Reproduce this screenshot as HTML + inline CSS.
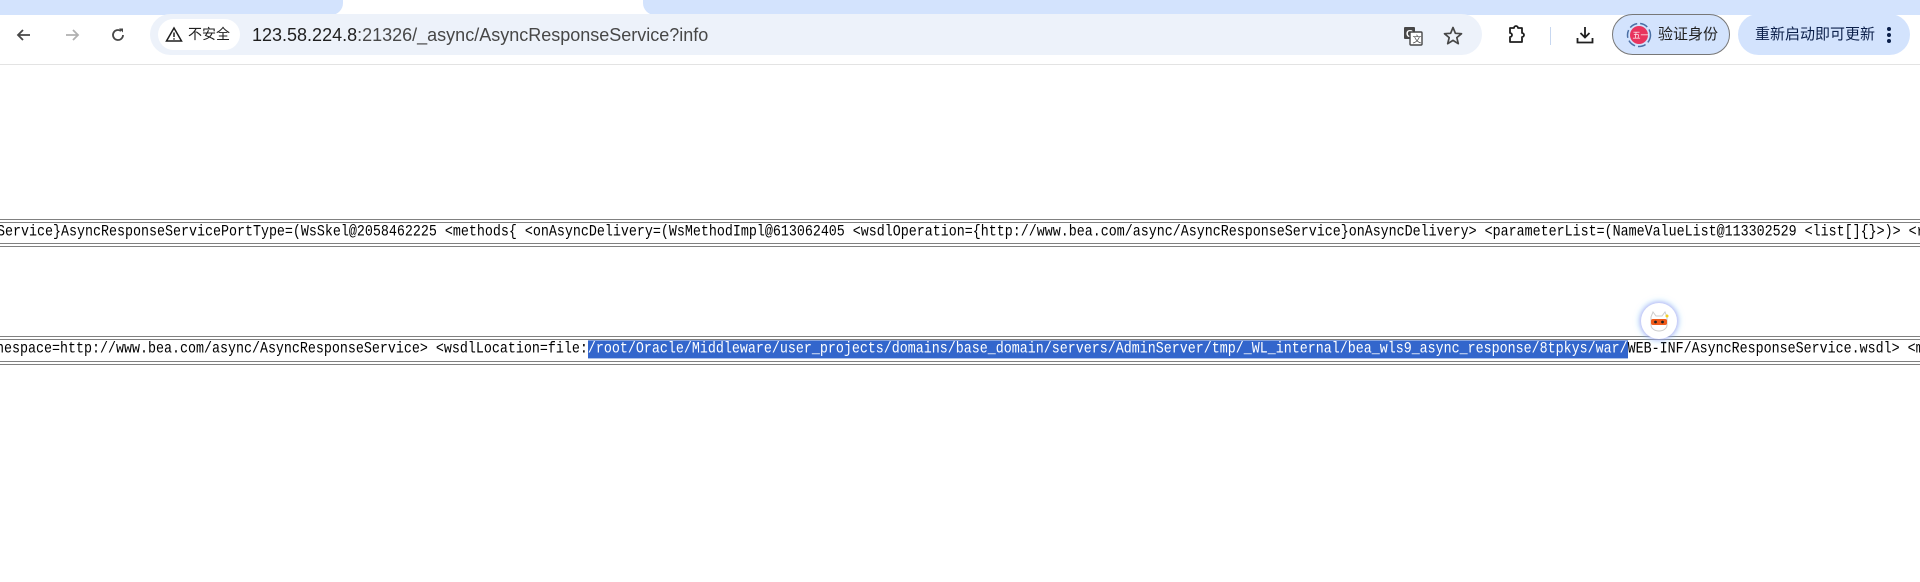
<!DOCTYPE html>
<html><head><meta charset="utf-8">
<style>
*{margin:0;padding:0;box-sizing:border-box}
body{width:1920px;height:582px;overflow:hidden;background:#fff;position:relative;font-family:"Liberation Sans","Noto Sans CJK SC",sans-serif}
.abs{position:absolute}
.strip{left:0;top:0;width:1920px;height:15px;background:#d3e3fd}
.tab{left:343px;top:0;width:300px;height:15px;background:#fff}
.tabl{left:323px;top:0;width:20px;height:15px;background:#fff}
.tabl:after{content:"";position:absolute;left:0;top:0;width:20px;height:15px;background:#d3e3fd;border-bottom-right-radius:12px}
.tabr{left:643px;top:0;width:20px;height:15px;background:#fff}
.tabr:after{content:"";position:absolute;left:0;top:0;width:20px;height:15px;background:#d3e3fd;border-bottom-left-radius:12px}
.bar{left:0;top:15px;width:1920px;height:50px;background:#fff;border-bottom:1px solid #e3e3e3}
.omni{left:150px;top:14px;width:1332px;height:41px;border-radius:21px;background:#edf2fa}
.chip{left:158px;top:19px;width:82px;height:31px;border-radius:16px;background:#fff;font-size:14px;color:#1f1f1f;line-height:31px;padding-left:30px}
.url{left:252px;top:24px;font-size:18px;color:#1f1f1f;line-height:22px}
.url span{color:#474747}
.pill1{left:1612px;top:14px;width:118px;height:41px;border-radius:21px;background:#d3e3fd;border:1px solid #777}
.pill2{left:1738px;top:14px;width:172px;height:41px;border-radius:21px;background:#d3e3fd}
.row{left:0;width:1930px;white-space:pre;font-family:"Liberation Mono",monospace;font-size:13.33px;color:#000;overflow:hidden;transform:scaleY(1.2);transform-origin:0 50%}
.ln{left:0;width:1920px;height:1px;background:#808080}
.sel{background:#3366cc;color:#fff}
</style></head><body>
<div class="abs strip"></div>
<div class="abs tabl"></div><div class="abs tab"></div><div class="abs tabr"></div>
<div class="abs bar"></div>
<svg class="abs" style="left:14px;top:25px" width="20" height="20" viewBox="0 0 20 20"><path d="M16 10H4M9 5L4 10L9 15" fill="none" stroke="#474747" stroke-width="1.8"/></svg>
<svg class="abs" style="left:62px;top:25px" width="20" height="20" viewBox="0 0 20 20"><path d="M4 10H16M11 5L16 10L11 15" fill="none" stroke="#b0b0b0" stroke-width="1.8"/></svg>
<svg class="abs" style="left:108px;top:25px" width="20" height="20" viewBox="0 0 20 20"><path d="M15 10A5 5 0 1 1 13 6" fill="none" stroke="#474747" stroke-width="1.8"/><path d="M11 3.5L15 3.5L15 7.5Z" fill="#474747"/></svg>
<div class="abs omni" style="top:14px"></div>
<div class="abs chip">不安全</div>
<svg class="abs" style="left:165px;top:26px" width="18" height="17" viewBox="0 0 18 17"><path d="M9 2L16.5 15H1.5Z" fill="none" stroke="#1f1f1f" stroke-width="1.5"/><path d="M9 6.5V11M9 12.3V13.6" stroke="#1f1f1f" stroke-width="1.5"/></svg>
<div class="abs url">123.58.224.8<span>:21326/_async/AsyncResponseService?info</span></div>
<svg class="abs" style="left:1402px;top:25px" width="22" height="22" viewBox="0 0 22 22"><rect x="2" y="2" width="11" height="12" rx="1" fill="#474747"/><text x="4" y="12" font-size="10" fill="#fff" font-family="Liberation Sans" font-weight="bold">G</text><rect x="8" y="7" width="12" height="13" rx="1" fill="#fff" stroke="#474747" stroke-width="1.4"/><text x="10.5" y="17.5" font-size="9" fill="#474747" font-family="Noto Sans CJK SC">文</text></svg>
<svg class="abs" style="left:1442px;top:25px" width="22" height="22" viewBox="0 0 22 22"><path d="M11 2.5L13.4 8.3L19.5 8.7L14.8 12.6L16.3 18.7L11 15.4L5.7 18.7L7.2 12.6L2.5 8.7L8.6 8.3Z" fill="none" stroke="#474747" stroke-width="1.7" stroke-linejoin="round"/></svg>
<svg class="abs" style="left:1505px;top:24px" width="22" height="22" viewBox="0 0 22 22"><path d="M5 4H9A2 2 0 0 1 13 4H17V9A2 2 0 0 1 17 13V18H5V13A2 2 0 0 0 5 9Z" fill="none" stroke="#1f1f1f" stroke-width="1.8" stroke-linejoin="round"/></svg>
<div class="abs" style="left:1550px;top:27px;width:1px;height:18px;background:#c7d7f0"></div>
<svg class="abs" style="left:1574px;top:24px" width="22" height="22" viewBox="0 0 22 22"><path d="M11 3V13M6.5 9L11 13.5L15.5 9M3.5 14V18.5H18.5V14" fill="none" stroke="#1f1f1f" stroke-width="1.8"/></svg>
<div class="abs pill1"></div>
<svg class="abs" style="left:1626px;top:22px" width="26" height="26" viewBox="0 0 26 26"><circle cx="13" cy="13" r="11.5" fill="none" stroke="#4a6fa5" stroke-width="1.5" stroke-dasharray="8 3"/><circle cx="13" cy="13" r="9" fill="#e8345e"/><text x="6.5" y="16" font-size="8" fill="#fff" font-family="Noto Sans CJK SC">五一</text></svg>
<div class="abs" style="left:1658px;top:25px;font-size:15px;color:#1f1f1f;line-height:20px">验证身份</div>
<div class="abs pill2"></div>
<div class="abs" style="left:1755px;top:25px;font-size:15px;color:#0b1f4a;line-height:20px">重新启动即可更新</div>
<svg class="abs" style="left:1884px;top:24px" width="10" height="22" viewBox="0 0 10 22"><circle cx="5" cy="5" r="2" fill="#0b1f4a"/><circle cx="5" cy="11" r="2" fill="#0b1f4a"/><circle cx="5" cy="17" r="2" fill="#0b1f4a"/></svg>

<div class="abs ln" style="top:219px"></div>
<div class="abs ln" style="top:222px"></div>
<div class="abs row" style="top:224px;height:18px;line-height:18px;left:-3px">Service}AsyncResponseServicePortType=(WsSkel@2058462225 &lt;methods{ &lt;onAsyncDelivery=(WsMethodImpl@613062405 &lt;wsdlOperation={http://www.bea.com/async/AsyncResponseService}onAsyncDelivery&gt; &lt;parameterList=(NameValueList@113302529 &lt;list[]{}&gt;)&gt; &lt;r</div>
<div class="abs ln" style="top:243px"></div>
<div class="abs ln" style="top:246px"></div>
<div class="abs ln" style="top:336px"></div>
<div class="abs ln" style="top:339px"></div>
<div class="abs row" style="top:341px;height:18px;line-height:18px;left:-4px">nespace=http://www.bea.com/async/AsyncResponseService&gt; &lt;wsdlLocation=file:<span class="sel">/root/Oracle/Middleware/user_projects/domains/base_domain/servers/AdminServer/tmp/_WL_internal/bea_wls9_async_response/8tpkys/war/</span>WEB-INF/AsyncResponseService.wsdl&gt; &lt;m</div>
<div class="abs ln" style="top:361px"></div>
<div class="abs ln" style="top:364px"></div>
<div class="abs" style="left:1641px;top:303px;width:36px;height:36px;border-radius:50%;background:#fff;box-shadow:0 0 6px 2px rgba(120,200,255,.6),0 0 3px 1px rgba(255,120,220,.5)"></div>
<svg class="abs" style="left:1647px;top:309px" width="24" height="24" viewBox="0 0 24 24"><path d="M4 8L6 3L9 7H15L18 3L20 8V16A8 6 0 0 1 4 16Z" fill="#fff" stroke="#ccc"/><rect x="4" y="10" width="16" height="6" rx="2" fill="#f05a1a"/><circle cx="8.5" cy="13" r="1.4" fill="#222"/><circle cx="15.5" cy="13" r="1.4" fill="#222"/><circle cx="20" cy="7" r="1.5" fill="#f5d020"/></svg>
</body></html>
